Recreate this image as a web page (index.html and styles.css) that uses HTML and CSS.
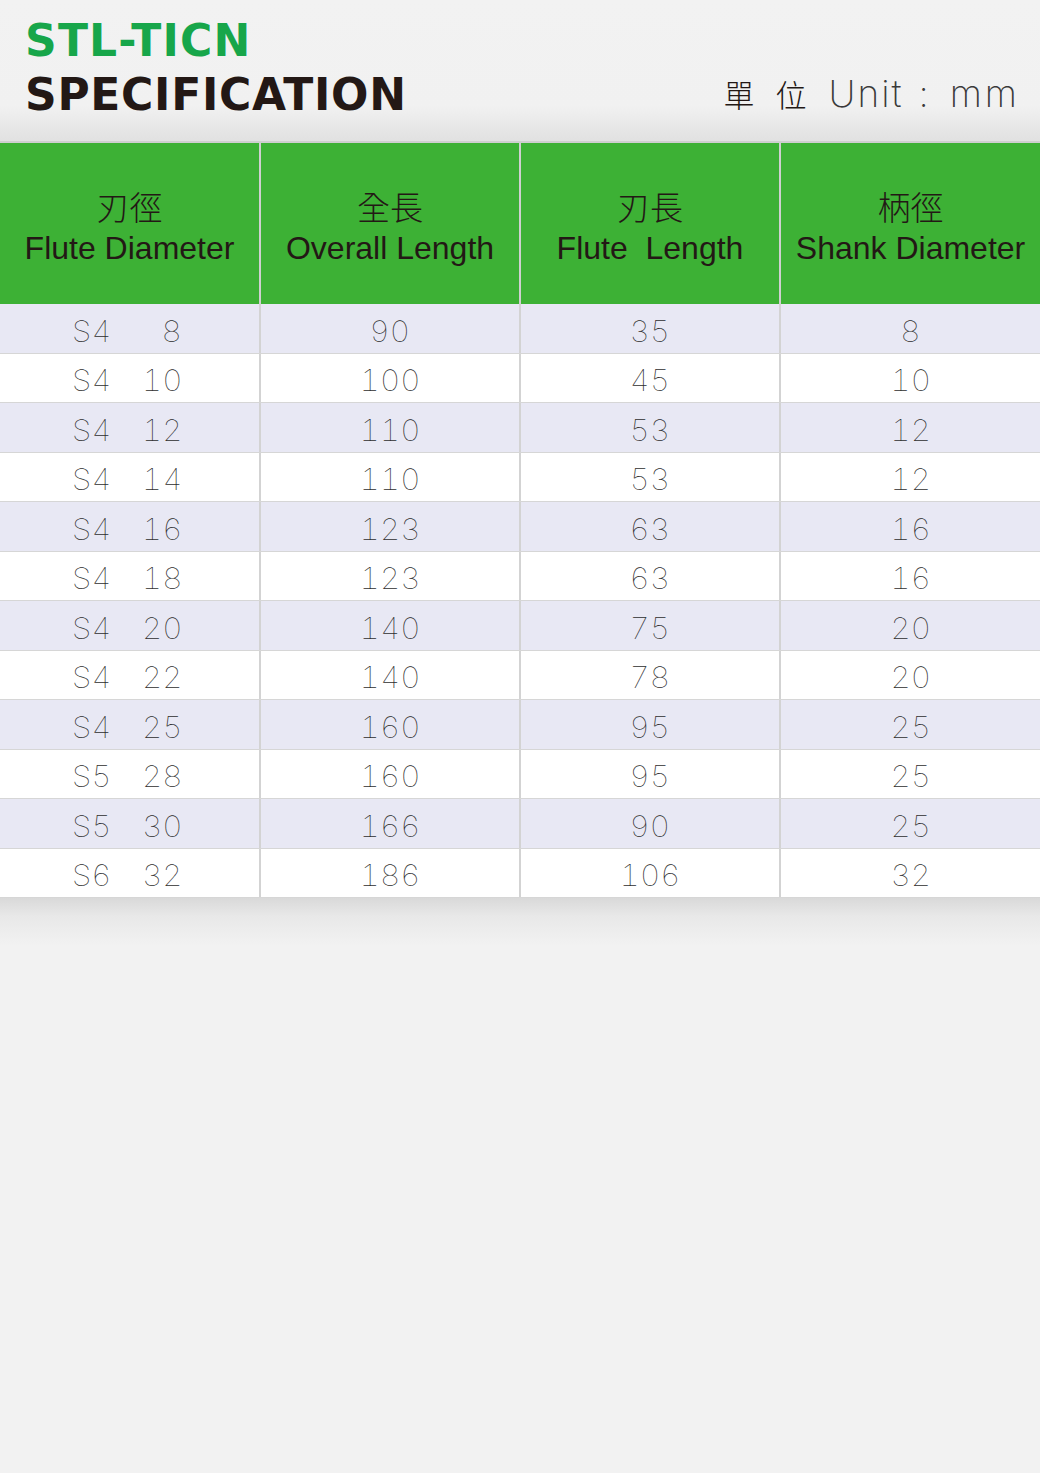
FILE: index.html
```html
<!DOCTYPE html>
<html lang="zh-Hant">
<head>
<meta charset="utf-8">
<title>STL-TICN Specification</title>
<link rel="stylesheet" href="styles.css">
</head>
<body>
<div class="page">
  <header class="head">
    <div class="titles">
      <h1 class="brand">STL-TICN</h1>
      <h2 class="heading">SPECIFICATION</h2>
    </div>
    <div class="unit">
      <span class="unit-cjk">單</span>
      <span class="unit-cjk">位</span>
      <span class="unit-lat unit-word">Unit</span>
      <span class="unit-lat unit-colon">:</span>
      <span class="unit-lat unit-last">mm</span>
    </div>
  </header>

  <div class="spec">
    <div class="row row-head">
      <div class="cell"><span class="zh">刃徑</span><span class="en">Flute Diameter</span></div>
      <div class="cell"><span class="zh">全長</span><span class="en">Overall Length</span></div>
      <div class="cell"><span class="zh">刃長</span><span class="en">Flute&nbsp; Length</span></div>
      <div class="cell"><span class="zh">柄徑</span><span class="en">Shank Diameter</span></div>
    </div>

    <div class="row alt"><div class="cell"><span class="code"><span class="n">S4</span><span class="n">8</span></span></div><div class="cell"><span class="n">90</span></div><div class="cell"><span class="n">35</span></div><div class="cell"><span class="n">8</span></div></div>
    <div class="row"><div class="cell"><span class="code"><span class="n">S4</span><span class="n">10</span></span></div><div class="cell"><span class="n">100</span></div><div class="cell"><span class="n">45</span></div><div class="cell"><span class="n">10</span></div></div>
    <div class="row alt"><div class="cell"><span class="code"><span class="n">S4</span><span class="n">12</span></span></div><div class="cell"><span class="n">110</span></div><div class="cell"><span class="n">53</span></div><div class="cell"><span class="n">12</span></div></div>
    <div class="row"><div class="cell"><span class="code"><span class="n">S4</span><span class="n">14</span></span></div><div class="cell"><span class="n">110</span></div><div class="cell"><span class="n">53</span></div><div class="cell"><span class="n">12</span></div></div>
    <div class="row alt"><div class="cell"><span class="code"><span class="n">S4</span><span class="n">16</span></span></div><div class="cell"><span class="n">123</span></div><div class="cell"><span class="n">63</span></div><div class="cell"><span class="n">16</span></div></div>
    <div class="row"><div class="cell"><span class="code"><span class="n">S4</span><span class="n">18</span></span></div><div class="cell"><span class="n">123</span></div><div class="cell"><span class="n">63</span></div><div class="cell"><span class="n">16</span></div></div>
    <div class="row alt"><div class="cell"><span class="code"><span class="n">S4</span><span class="n">20</span></span></div><div class="cell"><span class="n">140</span></div><div class="cell"><span class="n">75</span></div><div class="cell"><span class="n">20</span></div></div>
    <div class="row"><div class="cell"><span class="code"><span class="n">S4</span><span class="n">22</span></span></div><div class="cell"><span class="n">140</span></div><div class="cell"><span class="n">78</span></div><div class="cell"><span class="n">20</span></div></div>
    <div class="row alt"><div class="cell"><span class="code"><span class="n">S4</span><span class="n">25</span></span></div><div class="cell"><span class="n">160</span></div><div class="cell"><span class="n">95</span></div><div class="cell"><span class="n">25</span></div></div>
    <div class="row"><div class="cell"><span class="code"><span class="n">S5</span><span class="n">28</span></span></div><div class="cell"><span class="n">160</span></div><div class="cell"><span class="n">95</span></div><div class="cell"><span class="n">25</span></div></div>
    <div class="row alt"><div class="cell"><span class="code"><span class="n">S5</span><span class="n">30</span></span></div><div class="cell"><span class="n">166</span></div><div class="cell"><span class="n">90</span></div><div class="cell"><span class="n">25</span></div></div>
    <div class="row"><div class="cell"><span class="code"><span class="n">S6</span><span class="n">32</span></span></div><div class="cell"><span class="n">186</span></div><div class="cell"><span class="n">106</span></div><div class="cell"><span class="n">32</span></div></div>
  </div>
  <div class="shade"></div>
</div>
</body>
</html>
```

FILE: styles.css
```css
html, body {
  margin: 0;
  padding: 0;
  background: #f2f2f2;
}

.page {
  width: 1040px;
}

/* ---------- header ---------- */
.head {
  height: 141px;
  box-sizing: border-box;
  display: flex;
  justify-content: space-between;
  align-items: flex-end;
  padding: 19px 23px 24px 25px;
  background: linear-gradient(to bottom, #f2f2f2 0, #f1f1f1 106px, #e1e1e1 141px);
}

.titles {
  display: flex;
  flex-direction: column;
}

.brand {
  margin: 0 0 10px 0;
  font-family: "DejaVu Sans", "Liberation Sans", sans-serif;
  font-weight: 700;
  font-size: 44px;
  line-height: 44px;
  letter-spacing: 1.2px;
  color: #17a64a;
}

.heading {
  margin: 0;
  font-family: "DejaVu Sans", "Liberation Sans", sans-serif;
  font-weight: 700;
  font-size: 44px;
  line-height: 44px;
  letter-spacing: 0.7px;
  color: #231815;
}

.unit {
  display: flex;
  align-items: baseline;
  margin-bottom: 1px;
  color: #231815;
  line-height: 44px;
}

.unit-cjk {
  font-family: "Noto Sans CJK TC", "Noto Sans CJK SC", sans-serif;
  font-weight: 300;
  font-size: 31px;
  margin-right: 21px;
  color: #231815;
}

.unit-cjk + .unit-lat {
  margin-left: 1px;
}

.unit-lat {
  font-family: Inter, "Liberation Sans", sans-serif;
  font-weight: 200;
  font-size: 37px;
  color: #3a3a3a;
}

.unit-word {
  letter-spacing: 2px;
}

.unit-colon {
  margin: 0 21px 0 15px;
}

.unit-last {
  letter-spacing: 3px;
  margin-right: -3px;
}

/* ---------- table ---------- */
.spec {
  display: flex;
  flex-direction: column;
  border-top: 2px solid #cfcfcf;
}

.row {
  display: grid;
  grid-template-columns: 259px 260px 260px 261px;
  height: 49.5px;
  box-sizing: border-box;
  border-bottom: 1px solid #d6d6d6;
  background: #ffffff;
}

.row.alt {
  background: #e8e8f4;
}

.cell {
  box-sizing: border-box;
  display: flex;
  align-items: center;
  justify-content: center;
  padding-top: 6px;
  font-family: Inter, "Liberation Sans", sans-serif;
  font-weight: 100;
  font-size: 29px;
  font-variant-numeric: tabular-nums;
  color: #2e2e2e;
}

.cell + .cell {
  border-left: 2px solid #d3d3d3;
}

.n {
  display: inline-block;
  transform: scaleX(1.08);
}

.code {
  display: flex;
  justify-content: space-between;
  width: 110px;
  margin-right: 5px;
}

.code .n:first-child {
  transform-origin: left center;
}

.code .n:last-child {
  transform-origin: right center;
}

.row-head {
  height: 161px;
  background: #3db135;
  border-bottom: 0;
}

.row-head .cell {
  flex-direction: column;
  padding-top: 7px;
  color: #231815;
}

.row-head .cell + .cell {
  border-left-color: #d0d0d0;
}

.zh {
  font-family: "Noto Sans CJK TC", "Noto Sans CJK SC", sans-serif;
  font-weight: 300;
  font-size: 33px;
  line-height: 40px;
}

.en {
  font-family: "Liberation Sans", Arial, sans-serif;
  font-weight: 400;
  font-size: 32px;
  line-height: 42px;
  margin-top: 1px;
}

.shade {
  height: 48px;
  background: linear-gradient(to bottom, #d9d9d9 0, #e8e8e8 18px, #f2f2f2 48px);
}
```
